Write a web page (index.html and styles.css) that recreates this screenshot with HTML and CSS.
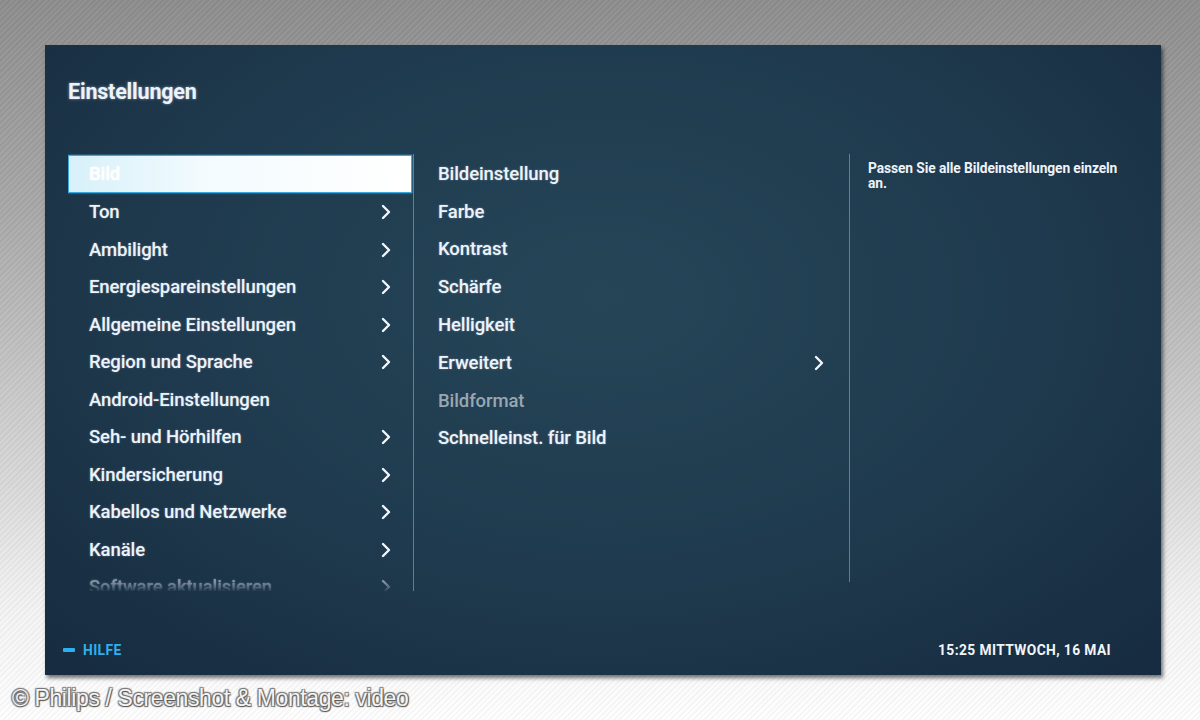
FILE: index.html
```html
<!DOCTYPE html>
<html lang="de">
<head>
  <meta charset="UTF-8" />
  <title>Einstellungen</title>
  <link rel="stylesheet" href="styles.css">
</head>
<body>
  <div class="tv-screen">
    <h1 class="screen-title">Einstellungen</h1>

    <div class="menu-columns">
      <ul class="menu-list main-menu">
        <li class="menu-item active">Bild <svg class="chev" viewBox="0 0 10 16"><polyline points="2,2 8,8 2,14"/></svg></li>
        <li class="menu-item">Ton <svg class="chev" viewBox="0 0 10 16"><polyline points="2,2 8,8 2,14"/></svg></li>
        <li class="menu-item">Ambilight <svg class="chev" viewBox="0 0 10 16"><polyline points="2,2 8,8 2,14"/></svg></li>
        <li class="menu-item">Energiespareinstellungen <svg class="chev" viewBox="0 0 10 16"><polyline points="2,2 8,8 2,14"/></svg></li>
        <li class="menu-item">Allgemeine Einstellungen <svg class="chev" viewBox="0 0 10 16"><polyline points="2,2 8,8 2,14"/></svg></li>
        <li class="menu-item">Region und Sprache <svg class="chev" viewBox="0 0 10 16"><polyline points="2,2 8,8 2,14"/></svg></li>
        <li class="menu-item">Android-Einstellungen</li>
        <li class="menu-item">Seh- und Hörhilfen <svg class="chev" viewBox="0 0 10 16"><polyline points="2,2 8,8 2,14"/></svg></li>
        <li class="menu-item">Kindersicherung <svg class="chev" viewBox="0 0 10 16"><polyline points="2,2 8,8 2,14"/></svg></li>
        <li class="menu-item">Kabellos und Netzwerke <svg class="chev" viewBox="0 0 10 16"><polyline points="2,2 8,8 2,14"/></svg></li>
        <li class="menu-item">Kanäle <svg class="chev" viewBox="0 0 10 16"><polyline points="2,2 8,8 2,14"/></svg></li>
        <li class="menu-item faded">Software aktualisieren <svg class="chev" viewBox="0 0 10 16"><polyline points="2,2 8,8 2,14"/></svg></li>
      </ul>

      <ul class="menu-list sub-menu">
        <li class="menu-item">Bildeinstellung</li>
        <li class="menu-item">Farbe</li>
        <li class="menu-item">Kontrast</li>
        <li class="menu-item">Schärfe</li>
        <li class="menu-item">Helligkeit</li>
        <li class="menu-item">Erweitert <svg class="chev" viewBox="0 0 10 16"><polyline points="2,2 8,8 2,14"/></svg></li>
        <li class="menu-item disabled">Bildformat</li>
        <li class="menu-item">Schnelleinst. für Bild</li>
      </ul>

      <div class="info-pane">
        <p>Passen Sie alle Bildeinstellungen einzeln an.</p>
      </div>
    </div>

    <div class="screen-footer">
      <span class="help"><span class="help-key"></span>HILFE</span>
      <span class="clock">15:25 MITTWOCH, 16 MAI</span>
    </div>
  </div>

  <p class="credit">© Philips / Screenshot &amp; Montage: video</p>
</body>
</html>
```

FILE: styles.css
```css
html, body {
  height: 100%;
}
body {
  margin: 0;
  font-family: Roboto, "Liberation Sans", sans-serif;
  background:
    repeating-linear-gradient(135deg, rgba(255,255,255,0.04) 0 2px, rgba(0,0,0,0.03) 2px 4px),
    linear-gradient(to bottom, #8d8d8d 0%, #a9a9a9 30%, #d6d6d6 65%, #f4f4f4 85%, #ffffff 100%);
  overflow: hidden;
}

.tv-screen {
  box-sizing: border-box;
  width: 1116px;
  height: 630px;
  margin: 45px 0 0 45px;
  padding: 0 20px 0 23px;
  display: flex;
  flex-direction: column;
  color: #eef3f8;
  background: radial-gradient(ellipse 70% 80% at 50% 40%, #264658 0%, #1f3a4e 55%, #172c40 100%);
  box-shadow: 2px 3px 4px rgba(0,0,0,0.55);
}

.screen-title {
  margin: 0;
  height: 109px;
  display: flex;
  align-items: center;
  padding-bottom: 16px;
  box-sizing: border-box;
  font-size: 21.5px;
  font-weight: 700;
  letter-spacing: -0.2px;
  text-shadow: 0 0 3px rgba(200,220,255,0.6);
}

.menu-columns {
  display: flex;
  height: 437px;
}

.menu-list {
  list-style: none;
  margin: 0;
  padding: 0;
  overflow: hidden;
}

.menu-item {
  height: 37.5px;
  display: flex;
  align-items: center;
  justify-content: space-between;
  font-size: 18.5px;
  font-weight: 500;
  letter-spacing: -0.1px;
  text-shadow: 0 0 2px rgba(200,220,255,0.45);
}

.chev {
  width: 10px;
  height: 16px;
  fill: none;
  stroke: #f2f6fa;
  stroke-width: 2.4;
  stroke-linecap: round;
  stroke-linejoin: round;
}

.main-menu {
  width: 346px;
  border-right: 1px solid rgba(190,205,220,0.45);
  box-sizing: border-box;
}
.main-menu .menu-item {
  padding: 0 22px 0 21px;
}
.main-menu .menu-item.active {
  height: 36px;
  margin-top: 1px;
  margin-bottom: 0.5px;
  margin-right: 1px;
  color: #ffffff;
  border: 1px solid #3aa7de;
  background: linear-gradient(to right, #d7f0fa 0%, #f3fbfe 40%, #ffffff 100%);
  box-shadow: 0 0 2px #3aa7de;
  padding-left: 20px;
  text-shadow: 0 0 2px rgba(255,255,255,1);
}
.main-menu .menu-item.active .chev {
  stroke: #ffffff;
}
.main-menu .menu-item.faded {
  color: #8494a1;
  -webkit-mask-image: linear-gradient(to bottom, #000 35%, rgba(0,0,0,0.6) 48%, transparent 62%);
  mask-image: linear-gradient(to bottom, #000 35%, rgba(0,0,0,0.6) 48%, transparent 62%);
}
.main-menu .menu-item.faded .chev {
  stroke: #8494a1;
}

.sub-menu {
  width: 436px;
  height: 428px;
  padding: 1px 25px 0 24px;
  box-sizing: border-box;
  border-right: 1px solid rgba(190,205,220,0.45);
}
.sub-menu .menu-item {
  height: 37.8px;
}
.sub-menu .menu-item.disabled {
  color: #9aa7b2;
  text-shadow: none;
}

.info-pane {
  flex: 1;
  padding: 7px 0 0 18px;
}
.info-pane p {
  margin: 0;
  width: 262px;
  font-size: 13.8px;
  font-weight: 700;
  line-height: 15px;
  letter-spacing: -0.1px;
}

.screen-footer {
  flex: 1;
  display: flex;
  align-items: center;
  justify-content: space-between;
  padding: 34px 30px 0 0;
  font-size: 13.8px;
  font-weight: 700;
  letter-spacing: 0.4px;
}
.help {
  display: flex;
  align-items: center;
  color: #2fb0ee;
  margin-left: -5px;
}
.help-key {
  width: 12px;
  height: 4px;
  border-radius: 1px;
  background: #2fb0ee;
  margin-right: 8px;
}
.clock {
  color: #f2f5f9;
}

.credit {
  margin: 10px 0 0 12px;
  font-family: "Liberation Sans", Arial, sans-serif;
  font-size: 23px;
  color: #f4f4f4;
  letter-spacing: -0.4px;
  text-shadow: 1px 1px 1px #555, -1px -1px 1px #777, 1px -1px 1px #777, -1px 1px 1px #777;
}
```
